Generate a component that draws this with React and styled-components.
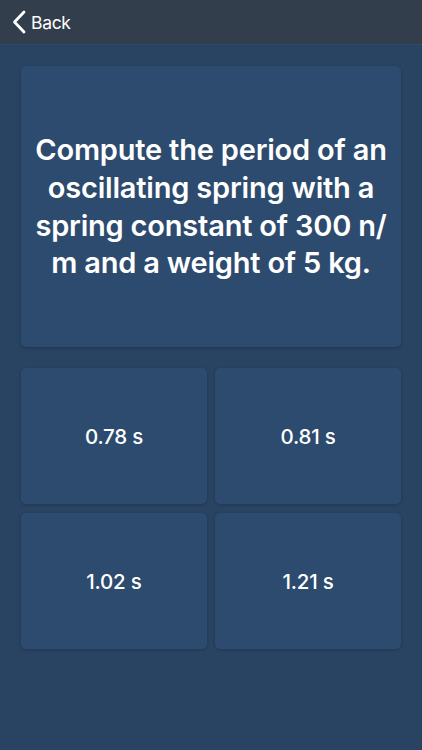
import React from "react";
import styled, { createGlobalStyle } from "styled-components";

const Global = createGlobalStyle`
  html, body { margin: 0; padding: 0; background: #294362; }
  body { font-family: Inter, "Open Sans", "Liberation Sans", sans-serif; -webkit-font-smoothing: antialiased; }
  * { box-sizing: border-box; }
`;

const Screen = styled.div`
  width: 422px;
  height: 750px;
  background: #294362;
  display: flex;
  flex-direction: column;
  overflow: hidden;
`;

const NavBar = styled.div`
  height: 45px;
  background: #333e4d;
  border-bottom: 1px solid #2e4a6b;
  display: flex;
  align-items: center;
  padding-left: 12px;
`;

const BackButton = styled.button`
  display: flex;
  align-items: center;
  gap: 5px;
  background: none;
  border: none;
  padding: 0;
  color: #ffffff;
  font-family: Inter, "Liberation Sans", sans-serif;
  font-size: 17.5px;
  font-weight: 400;
  letter-spacing: -0.3px;
  cursor: pointer;
`;

const Content = styled.div`
  padding: 21px 21px 0 21px;
  display: flex;
  flex-direction: column;
  gap: 21px;
`;

const Card = styled.div`
  background: #2d4b6e;
  border-radius: 5px;
  box-shadow: 0 1px 3px rgba(20, 35, 55, 0.35);
  display: flex;
  align-items: center;
  justify-content: center;
  text-align: center;
  color: #ffffff;
`;

const QuestionCard = styled(Card)`
  height: 281px;
  padding: 0 12px;
`;

const QuestionText = styled.div`
  font-size: 29px;
  font-weight: 600;
  line-height: 37.7px;
  letter-spacing: -0.2px;
`;

const AnswerGrid = styled.div`
  display: grid;
  grid-template-columns: 1fr 1fr;
  grid-auto-rows: 136px;
  column-gap: 8px;
  row-gap: 9px;
`;

const AnswerCard = styled(Card)`
  font-size: 20.5px;
  font-weight: 500;
  letter-spacing: -0.2px;
`;

const answers = ["0.78 s", "0.81 s", "1.02 s", "1.21 s"];

export default function App() {
  return (
    <Screen>
      <Global />
      <NavBar>
        <BackButton>
          <svg width="14" height="24" viewBox="0 0 14 24" fill="none">
            <path d="M12 2 L2.5 12 L12 22" stroke="#fff" strokeWidth="2.8" strokeLinecap="round" strokeLinejoin="round" />
          </svg>
          Back
        </BackButton>
      </NavBar>
      <Content>
        <QuestionCard>
          <QuestionText>
            Compute the period of an oscillating spring with a spring constant of 300 n/ m and a weight of 5 kg.
          </QuestionText>
        </QuestionCard>
        <AnswerGrid>
          {answers.map((a) => (
            <AnswerCard key={a}>{a}</AnswerCard>
          ))}
        </AnswerGrid>
      </Content>
    </Screen>
  );
}
